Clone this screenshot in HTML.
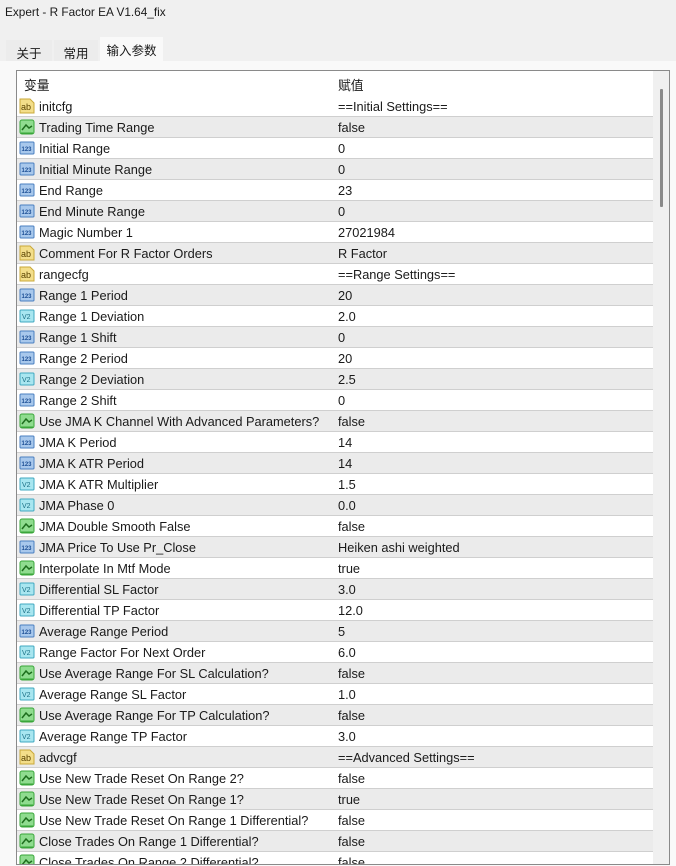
<!DOCTYPE html>
<html><head><meta charset="utf-8"><style>
*{margin:0;padding:0;box-sizing:border-box}
body{width:676px;height:866px;overflow:hidden;background:#f0f0f0;font-family:"Liberation Sans","Noto Sans CJK SC",sans-serif;font-size:12.8px;color:#1a1a1a;position:relative}
.title{position:absolute;left:5px;top:5px;font-size:11.8px}
.tab{position:absolute;top:40px;height:21px;background:#ececec;font-size:12.5px;padding:3px 0 0 0;text-align:center}
.tab.sel{top:37px;height:25px;background:#f9f9f9;padding-top:3px}
.panel{position:absolute;left:0;top:61px;width:676px;height:805px;background:#f9f9f9}
.box{position:absolute;left:16px;top:70px;width:654px;height:795px;border:1px solid #8a8a8a;background:#fff;overflow:hidden}
.hdr{position:absolute;left:0;top:0;width:636px;height:25px}
.hdr span{position:absolute;top:4px}
.row{position:absolute;left:0;width:636px;height:21px;border-bottom:1px solid #cfcfcf}
.row.g{background:#ebebeb}
.row .n{position:absolute;left:22px;top:3px;white-space:nowrap}
.row .v{position:absolute;left:321px;top:3px;white-space:nowrap}
.row .ic{position:absolute;left:2px;top:2px;width:16px;height:16px}
.sb{position:absolute;left:636px;top:0;width:17px;height:800px;background:#f0f0f0}
.th{position:absolute;left:643px;top:18px;width:3px;height:118px;background:#8a8a8a;border-radius:1px}
</style></head><body>
<div class="title">Expert - R Factor EA V1.64_fix</div>
<div class="tab" style="left:6px;width:46px">关于</div>
<div class="tab" style="left:54px;width:44px">常用</div>
<div class="panel"></div>
<div class="tab sel" style="left:100px;width:63px">输入参数</div>
<div class="box">
<div class="hdr"><span style="left:7px">变量</span><span style="left:321px">赋值</span></div>
<div id="rows"></div>
<div class="sb"></div><div class="th"></div>
</div>
<script>
var R=[["a","initcfg","==Initial Settings=="],["b","Trading Time Range","false"],["i","Initial Range","0"],["i","Initial Minute Range","0"],["i","End Range","23"],["i","End Minute Range","0"],["i","Magic Number 1","27021984"],["a","Comment For R Factor Orders","R Factor"],["a","rangecfg","==Range Settings=="],["i","Range 1 Period","20"],["d","Range 1 Deviation","2.0"],["i","Range 1 Shift","0"],["i","Range 2 Period","20"],["d","Range 2 Deviation","2.5"],["i","Range 2 Shift","0"],["b","Use JMA K Channel With Advanced Parameters?","false"],["i","JMA K Period","14"],["i","JMA K ATR Period","14"],["d","JMA K ATR Multiplier","1.5"],["d","JMA Phase 0","0.0"],["b","JMA Double Smooth False","false"],["i","JMA Price To Use Pr_Close","Heiken ashi weighted"],["b","Interpolate In Mtf Mode","true"],["d","Differential SL Factor","3.0"],["d","Differential TP Factor","12.0"],["i","Average Range Period","5"],["d","Range Factor For Next Order","6.0"],["b","Use Average Range For SL Calculation?","false"],["d","Average Range SL Factor","1.0"],["b","Use Average Range For TP Calculation?","false"],["d","Average Range TP Factor","3.0"],["a","advcgf","==Advanced Settings=="],["b","Use New Trade Reset On Range 2?","false"],["b","Use New Trade Reset On Range 1?","true"],["b","Use New Trade Reset On Range 1 Differential?","false"],["b","Close Trades On Range 1 Differential?","false"],["b","Close Trades On Range 2 Differential?","false"]];
function icon(t){
if(t=="a")return '<svg class="ic" viewBox="0 0 16 16"><path d="M1 1h10l4 4v10H1z" fill="#f3de8a" stroke="#c9a83a"/><text x="2" y="12" font-size="9" font-family="Liberation Sans" fill="#5a4400">ab</text></svg>';
if(t=="b")return '<svg class="ic" viewBox="0 0 16 16"><rect x="1" y="1" width="14" height="14" rx="2" fill="#8fdc8f" stroke="#3aa63a"/><path d="M3 11l4-5 3 3 3-2" fill="none" stroke="#1e6e1e" stroke-width="1.5"/><path d="M2 14h12" stroke="#3aa63a"/></svg>';
if(t=="i")return '<svg class="ic" viewBox="0 0 16 16"><rect x="1" y="2" width="14" height="12" rx="1" fill="#a8c8ec" stroke="#4a7fc0"/><text x="2.5" y="11" font-size="6" font-family="Liberation Sans" font-weight="bold" fill="#1d4f95">123</text></svg>';
return '<svg class="ic" viewBox="0 0 16 16"><rect x="1" y="2" width="14" height="12" rx="1" fill="#a8e6f0" stroke="#40a8c0"/><text x="3" y="11" font-size="7" font-family="Liberation Sans" fill="#1b6f85">V2</text></svg>';}
var h="";R.forEach(function(r,k){h+='<div class="row'+(k%2?' g':'')+'" style="top:'+(25+k*21)+'px">'+icon(r[0])+'<span class="n">'+r[1]+'</span><span class="v">'+r[2]+'</span></div>';});
document.getElementById("rows").innerHTML=h;
</script>
</body></html>
